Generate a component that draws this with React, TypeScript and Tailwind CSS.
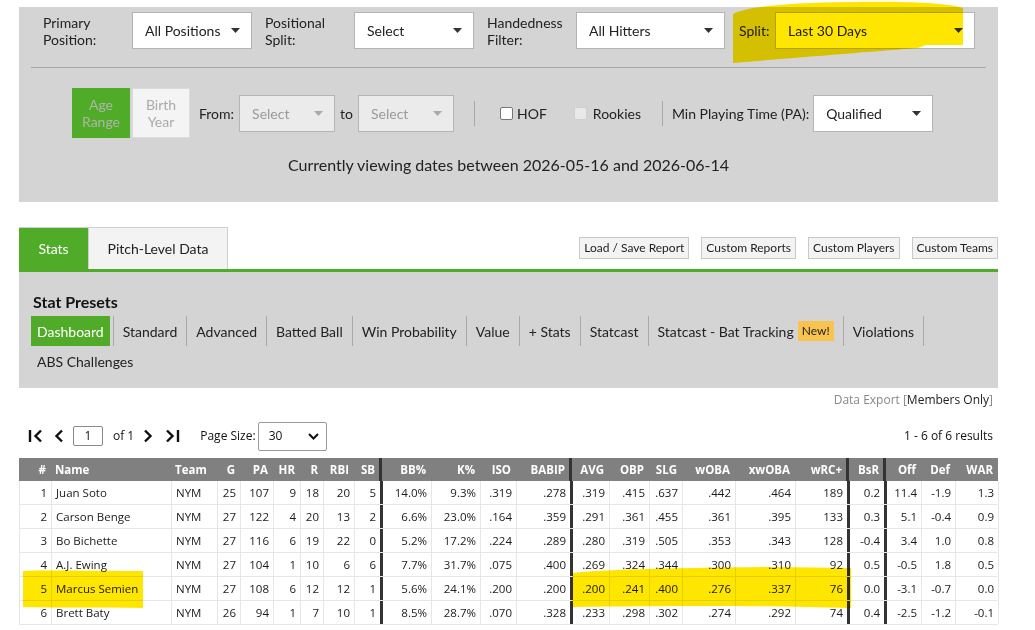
import React from "react";

const Caret = ({ color = "#333" }: { color?: string }) => (
  <svg width="9" height="5" viewBox="0 0 9 5" className="shrink-0">
    <path d="M0 0h9L4.5 5z" fill={color} />
  </svg>
);

const TF = "font-['Open_Sans',sans-serif]";

type Col = { h: string; l?: boolean; t?: boolean };
const cols: Col[] = [
  { h: "#" },
  { h: "Name", l: true },
  { h: "Team", l: true },
  { h: "G" },
  { h: "PA" },
  { h: "HR" },
  { h: "R" },
  { h: "RBI" },
  { h: "SB", t: true },
  { h: "BB%" },
  { h: "K%" },
  { h: "ISO" },
  { h: "BABIP", t: true },
  { h: "AVG" },
  { h: "OBP" },
  { h: "SLG" },
  { h: "wOBA" },
  { h: "xwOBA" },
  { h: "wRC+", t: true },
  { h: "BsR", t: true },
  { h: "Off" },
  { h: "Def" },
  { h: "WAR" },
];

const rows: string[][] = [
  ["1", "Juan Soto", "NYM", "25", "107", "9", "18", "20", "5", "14.0%", "9.3%", ".319", ".278", ".319", ".415", ".637", ".442", ".464", "189", "0.2", "11.4", "-1.9", "1.3"],
  ["2", "Carson Benge", "NYM", "27", "122", "4", "20", "13", "2", "6.6%", "23.0%", ".164", ".359", ".291", ".361", ".455", ".361", ".395", "133", "0.3", "5.1", "-0.4", "0.9"],
  ["3", "Bo Bichette", "NYM", "27", "116", "6", "19", "22", "0", "5.2%", "17.2%", ".224", ".289", ".280", ".319", ".505", ".353", ".343", "128", "-0.4", "3.4", "1.0", "0.8"],
  ["4", "A.J. Ewing", "NYM", "27", "104", "1", "10", "6", "6", "7.7%", "31.7%", ".075", ".400", ".269", ".324", ".344", ".300", ".310", "92", "0.5", "-0.5", "1.8", "0.5"],
  ["5", "Marcus Semien", "NYM", "27", "108", "6", "12", "12", "1", "5.6%", "24.1%", ".200", ".200", ".200", ".241", ".400", ".276", ".337", "76", "0.0", "-3.1", "-0.7", "0.0"],
  ["6", "Brett Baty", "NYM", "26", "94", "1", "7", "10", "1", "8.5%", "28.7%", ".070", ".328", ".233", ".298", ".302", ".274", ".292", "74", "0.4", "-2.5", "-1.2", "-0.1"],
];

const GRID =
  "grid grid-cols-[32px_120px_46px_23px_33px_27px_23px_31px_28px_49px_49px_36px_56px_37px_40px_33px_53px_60px_54px_37px_35px_34px_43px]";

function Label({ children, className }: { children: React.ReactNode; className: string }) {
  return <div className={"text-[14px] leading-[17px] text-[#222] " + className}>{children}</div>;
}

function Select({ text, className }: { text: string; className: string }) {
  return (
    <div
      className={
        "h-[37px] bg-white border border-[#b4b4b4] flex items-center justify-between pl-[12px] pr-[11px] text-[14px] text-[#222] " +
        className
      }
    >
      <span>{text}</span>
      <Caret />
    </div>
  );
}

function DisabledSelect({ className }: { className: string }) {
  return (
    <div
      className={
        "h-[37px] w-[96px] bg-[#ebebeb] border border-[#b4b4b4] flex items-center justify-between pl-[12px] pr-[11px] text-[14px] text-[#9a9a9a] " +
        className
      }
    >
      <span>Select</span>
      <Caret color="#aaa" />
    </div>
  );
}

const presets = [
  "Standard",
  "Advanced",
  "Batted Ball",
  "Win Probability",
  "Value",
  "+ Stats",
  "Statcast",
];

export default function App() {
  return (
    <div className="relative w-[1035px] h-[630px] bg-white overflow-hidden font-[Lato,sans-serif] text-[#222]">
      {/* Filter panel */}
      <div className="ml-[19px] w-[979px] mt-[7px] h-[195px] bg-[#d4d4d4] pt-[5px]">
        <div className="flex items-center h-[37px] pl-[24px]">
          <Label className="w-[89px]">
            Primary
            <br />
            Position:
          </Label>
          <Select text="All Positions" className="w-[120px]" />
          <Label className="w-[89px] ml-[13px]">
            Positional
            <br />
            Split:
          </Label>
          <Select text="Select" className="w-[120px]" />
          <Label className="w-[89px] ml-[13px]">
            Handedness
            <br />
            Filter:
          </Label>
          <Select text="All Hitters" className="w-[149px]" />
          <Label className="w-[36px] ml-[14px]">Split:</Label>
          <Select text="Last 30 Days" className="w-[200px]" />
        </div>
        <div className="mx-[12px] mt-[18px] h-px bg-[#a8a8a8]" />
        <div className="flex items-center mt-[20px] ml-[53px] h-[50px]">
          <div className="w-[58px] h-[50px] bg-[#50ac28] text-[#aeb6a8] text-[14px] leading-[17px] flex items-center justify-center text-center">
            Age
            <br />
            Range
          </div>
          <div className="ml-[2px] w-[58px] h-[50px] bg-[#f4f4f4] border border-[#dcdcdc] text-[#aaa] text-[14px] leading-[17px] flex items-center justify-center text-center">
            Birth
            <br />
            Year
          </div>
          <span className="ml-[9px] text-[14px]">From:</span>
          <DisabledSelect className="ml-[5px]" />
          <span className="mx-[5px] text-[14px]">to</span>
          <DisabledSelect className="" />
          <div className="ml-[20px] w-px h-[25px] bg-[#a8a8a8]" />
          <div className="ml-[25px] w-[13px] h-[13px] bg-white border border-[#777] rounded-[2px]" />
          <span className="ml-[4px] text-[14px]">HOF</span>
          <div className="ml-[27px] w-[13px] h-[13px] bg-[#e9e9e9] border border-[#cfcfcf] rounded-[2px]" />
          <span className="ml-[6px] text-[14px]">Rookies</span>
          <div className="ml-[21px] w-px h-[25px] bg-[#a8a8a8]" />
          <span className="ml-[9px] text-[14px]">Min Playing Time (PA):</span>
          <Select text="Qualified" className="ml-[4px] w-[120px]" />
        </div>
        <div className="mt-[15px] text-center text-[16px] leading-[24px] text-[#222]">
          Currently viewing dates between 2026-05-16 and 2026-06-14
        </div>
      </div>

      {/* Tabs */}
      <div className="ml-[19px] w-[979px] mt-[25px] flex justify-between">
        <div className="flex h-[42px] border-t border-r border-[#cfcfcf]">
          <div className="w-[69px] bg-[#50ac28] text-white text-[14px] flex items-center justify-center">Stats</div>
          <div className="w-[139px] bg-[#f3f3f3] border-l border-[#cfcfcf] text-[14px] flex items-center justify-center">
            Pitch-Level Data
          </div>
        </div>
        <div className="flex gap-[12px] mt-[10px] h-[22px]">
          {["Load / Save Report", "Custom Reports", "Custom Players", "Custom Teams"].map((b) => (
            <div
              key={b}
              className="px-[4px] h-[22px] bg-[#f3f3f3] border border-[#c9c9c9] text-[12px] flex items-center"
            >
              {b}
            </div>
          ))}
        </div>
      </div>
      <div className="ml-[19px] w-[979px] h-[3px] bg-[#50ac28]" />

      {/* Presets */}
      <div className="ml-[19px] w-[979px] h-[116px] bg-[#d4d4d4] pl-[12px] pt-[20px]">
        <div className="ml-[2px] text-[16px] leading-[20px] font-bold text-[#111]">Stat Presets</div>
        <div className="mt-[4px] flex h-[30px] text-[14px]">
          <div className="px-[6px] bg-[#50ac28] text-white flex items-center mr-[3px]">Dashboard</div>
          {presets.map((p) => (
            <div key={p} className="px-[9px] border-l border-[#a8a8a8] flex items-center">
              {p}
            </div>
          ))}
          <div className="px-[9px] border-l border-[#a8a8a8] flex items-center">
            Statcast - Bat Tracking
            <span className="ml-[4px] px-[4px] h-[20px] bg-[#f8c44f] text-[12px] flex items-center">New!</span>
          </div>
          <div className="px-[9px] border-l border-r border-[#a8a8a8] flex items-center">Violations</div>
        </div>
        <div className="h-[30px] flex items-center pl-[6px] text-[14px]">ABS Challenges</div>
      </div>

      {/* Data export */}
      <div className={"ml-[19px] w-[979px] mt-[4px] pr-[5px] h-[16px] flex justify-end items-center text-[12px] " + TF}>
        <span className="text-[#888]">Data Export [</span>
        <span className="text-[#222]">Members Only</span>
        <span className="text-[#888]">]</span>
      </div>

      {/* Pagination */}
      <div className={"ml-[19px] w-[979px] mt-[13px] h-[30px] flex items-center text-[12px] " + TF}>
        <svg width="16" height="14" viewBox="0 0 16 14" className="ml-[9px]">
          <path d="M2 1v12" stroke="#111" strokeWidth="2.4" />
          <path d="M13 1.5L7.5 7l5.5 5.5" stroke="#111" strokeWidth="2.4" fill="none" />
        </svg>
        <svg width="10" height="14" viewBox="0 0 10 14" className="ml-[10px]">
          <path d="M8 1.5L2.5 7L8 12.5" stroke="#111" strokeWidth="2.4" fill="none" />
        </svg>
        <div className="ml-[9px] w-[30px] h-[20px] border border-[#8a8a8a] rounded-[2px] flex items-center justify-center text-[#111]">
          1
        </div>
        <span className="ml-[10px] text-[#111]">of 1</span>
        <svg width="10" height="14" viewBox="0 0 10 14" className="ml-[9px]">
          <path d="M2 1.5L7.5 7L2 12.5" stroke="#111" strokeWidth="2.4" fill="none" />
        </svg>
        <svg width="16" height="14" viewBox="0 0 16 14" className="ml-[11px]">
          <path d="M3 1.5L8.5 7L3 12.5" stroke="#111" strokeWidth="2.4" fill="none" />
          <path d="M14 1v12" stroke="#111" strokeWidth="2.4" />
        </svg>
        <span className="ml-[20px] text-[#111]">Page Size:</span>
        <div className="ml-[2px] w-[69px] h-[29px] border border-[#9a9a9a] rounded-[2px] bg-white flex items-center justify-between pl-[10px] pr-[7px] text-[#111]">
          <span>30</span>
          <svg width="11" height="7" viewBox="0 0 11 7">
            <path d="M1 1l4.5 4.5L10 1" stroke="#111" strokeWidth="2" fill="none" />
          </svg>
        </div>
        <span className="ml-auto mr-[5px] text-[#111]">1 - 6 of 6 results</span>
      </div>

      {/* Table */}
      <div className={"ml-[19px] w-[979px] mt-[7px] text-[11.5px] " + TF}>
        <div className={GRID + " h-[23px] bg-[#808080] text-white font-bold"}>
          {cols.map((c, i) => (
            <div
              key={i}
              className={
                "h-full flex items-center px-[4px] " +
                (c.t ? "border-r-[3px] border-[#333] " : "border-r border-[#808080] ") +
                (c.l ? "justify-start" : "justify-end")
              }
            >
              {c.h}
            </div>
          ))}
        </div>
        {rows.map((r, ri) => (
          <div key={ri} className={GRID + " h-[24px] border-b border-l border-[#e6e6e6] text-[#1a1a1a]"}>
            {r.map((v, ci) => (
              <div
                key={ci}
                className={
                  "h-full flex items-center px-[4px] " +
                  (cols[ci].t ? "border-r-[3px] border-[#333] " : "border-r border-[#e6e6e6] ") +
                  (cols[ci].l ? "justify-start" : "justify-end")
                }
              >
                {v}
              </div>
            ))}
          </div>
        ))}
      </div>

      {/* Marker highlights */}
      <svg className="absolute left-[728px] top-0 mix-blend-multiply pointer-events-none" width="240" height="66" viewBox="0 0 240 66">
        <path d="M5 14 C20 6, 60 3, 120 2 S 220 3, 235 8 L235 45 L198 45 L190 48 C150 51, 90 56, 5 63 Z" fill="#ffe600" />
      </svg>
      <svg className="absolute left-[21px] top-[568px] mix-blend-multiply pointer-events-none" width="126" height="42" viewBox="0 0 126 42">
        <path d="M2 3 C30 2, 80 3, 122 3 L122 40 C80 39, 40 40, 2 39 Z" fill="#ffe600" />
      </svg>
      <svg className="absolute left-[570px] top-[564px] mix-blend-multiply pointer-events-none" width="284" height="46" viewBox="0 0 284 46">
        <path d="M2 9 C40 5, 120 4, 200 3 L281 4 L281 44 C200 42, 140 41, 2 43 Z" fill="#ffe600" />
      </svg>
    </div>
  );
}
